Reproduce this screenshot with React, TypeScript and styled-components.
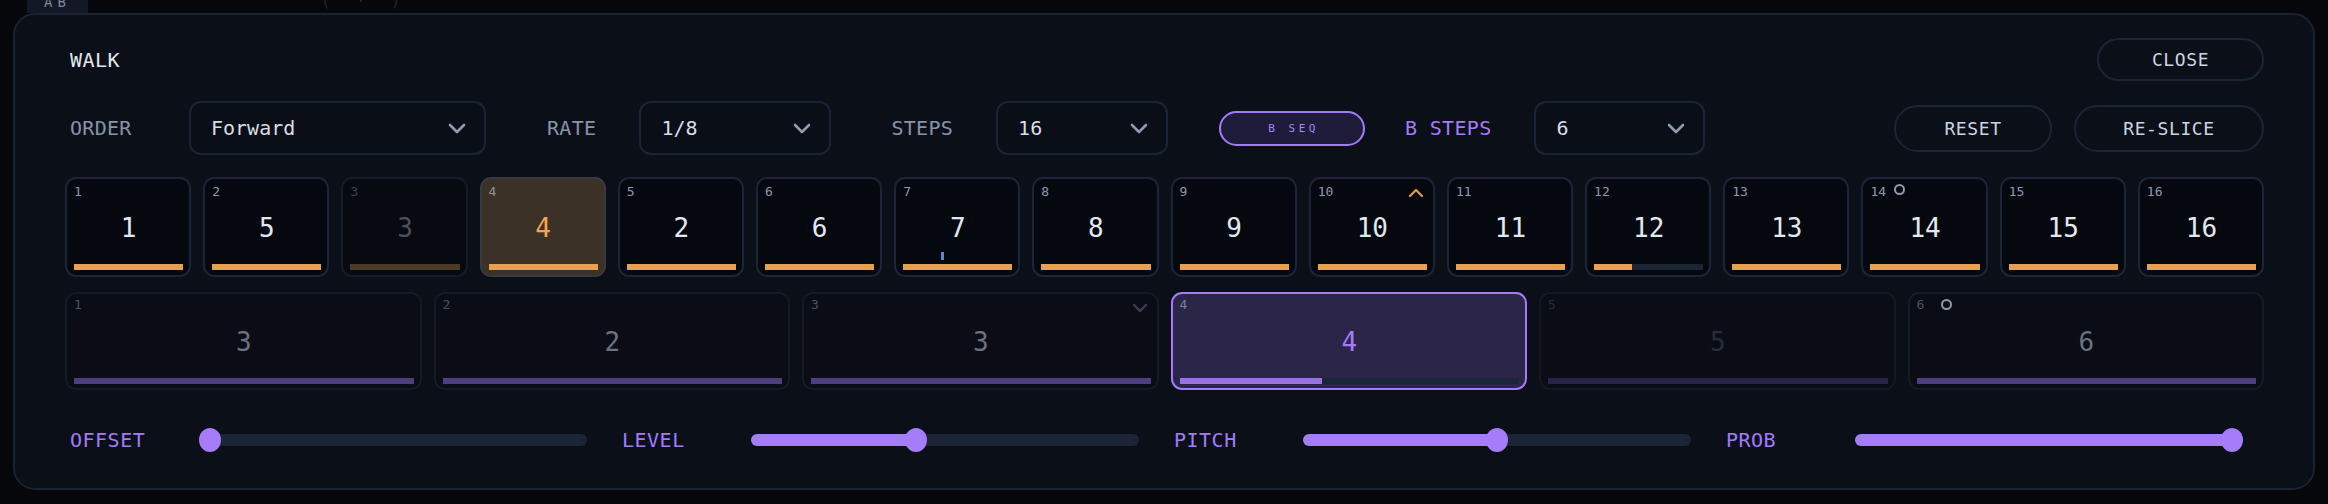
import React from "react";
import styled, { createGlobalStyle } from "styled-components";

const GlobalStyle = createGlobalStyle`
  html, body {
    margin: 0;
    padding: 0;
    background: #05070b;
  }
  body {
    width: 2328px;
    height: 504px;
    overflow: hidden;
    font-family: "DejaVu Sans Mono", "Liberation Mono", monospace;
  }
  * {
    box-sizing: border-box;
  }
`;

const Page = styled.div`
  width: 2328px;
  height: 504px;
  display: flex;
  flex-direction: column;
`;

/* strip of the window behind the dialog */
const TopStrip = styled.div`
  height: 13px;
  display: flex;
  align-items: flex-start;
  overflow: hidden;
  padding-left: 27px;
`;

const TabChip = styled.div`
  width: 61px;
  height: 13px;
  background: #131924;
  overflow: hidden;
  display: flex;
  justify-content: center;
`;

const TabText = styled.span`
  display: block;
  margin-top: -7px;
  line-height: 18px;
  font-size: 14px;
  letter-spacing: 5px;
  color: #7d889b;
`;

const GhostText = styled.span`
  display: block;
  margin-left: 233px;
  margin-top: -8px;
  line-height: 18px;
  font-size: 16px;
  letter-spacing: 2px;
  color: #1f2631;
  white-space: pre;
`;

const Panel = styled.section`
  margin: 0 13px;
  height: 477px;
  border: 2px solid #1a2333;
  border-radius: 22px;
  background: #0b0f18;
  padding: 23px 49px 0 50px;
  display: flex;
  flex-direction: column;
`;

const Header = styled.header`
  height: 43px;
  display: flex;
  align-items: center;
  justify-content: space-between;
`;

const Title = styled.h2`
  margin: 0;
  padding-left: 5px;
  font-size: 20px;
  font-weight: 400;
  letter-spacing: 0.5px;
  color: #e2e8f0;
`;

const PillButton = styled.button<{ $w: number; $h: number }>`
  width: ${(p) => p.$w}px;
  height: ${(p) => p.$h}px;
  border-radius: 24px;
  border: 2px solid #1b2435;
  background: transparent;
  color: #cbd5e1;
  font-family: inherit;
  font-size: 18px;
  letter-spacing: 0.6px;
  padding: 0;
  display: flex;
  align-items: center;
  justify-content: center;
`;

const Controls = styled.div`
  margin-top: 20px;
  height: 54px;
  display: flex;
  align-items: center;
  padding-left: 5px;
`;

const Field = styled.div<{ $before: number }>`
  display: flex;
  align-items: center;
  gap: 43px;
  margin-left: ${(p) => p.$before}px;
`;

const FieldLabel = styled.span<{ $accent?: boolean; $min?: number }>`
  font-size: 20px;
  letter-spacing: 0.3px;
  color: ${(p) => (p.$accent ? "#a47bfa" : "#8794aa")};
  min-width: ${(p) => p.$min ?? 0}px;
`;

const Select = styled.div<{ $w: number }>`
  width: ${(p) => p.$w}px;
  height: 54px;
  border: 2px solid #1b2435;
  border-radius: 12px;
  background: #0a0e17;
  display: flex;
  align-items: center;
  justify-content: space-between;
  padding: 0 18px 0 20px;
  color: #d8dee8;
  font-size: 20px;
`;

const SeqToggle = styled.button<{ $before: number }>`
  margin-left: ${(p) => p.$before}px;
  width: 146px;
  height: 35px;
  border-radius: 18px;
  border: 2px solid #a47bfa;
  background: #1e1b3b;
  color: #a48af5;
  font-family: inherit;
  font-size: 11px;
  letter-spacing: 3.5px;
  padding: 0 0 0 3px;
  display: flex;
  align-items: center;
  justify-content: center;
`;

const Spacer = styled.div`
  flex: 1;
`;

const ButtonPair = styled.div`
  display: flex;
  gap: 22px;
`;

const StepGrid = styled.div`
  margin-top: 22px;
  display: grid;
  grid-template-columns: repeat(16, 1fr);
  gap: 12px;
`;

const SliceGrid = styled.div`
  margin-top: 15px;
  display: grid;
  grid-template-columns: repeat(6, 1fr);
  gap: 12px;
`;

type TileState = "normal" | "dim" | "active";

const stepLook = {
  normal: { bg: "#05080f", border: "#1b2537", idx: "#8e9ab0", num: "#e2e8f0", bar: "#e2a24f" },
  dim: { bg: "#070a11", border: "#151c28", idx: "#3a4252", num: "#4a505c", bar: "#4a3b28" },
  active: { bg: "#3c3126", border: "#363a42", idx: "#8d9098", num: "#f2a64c", bar: "#e2a24f" },
};

const sliceLook = {
  normal: { bg: "#0a0d16", border: "#141b27", idx: "#4a5363", num: "#6b7280", bar: "#4d3f80" },
  dim: { bg: "#0a0d16", border: "#121824", idx: "#262d3a", num: "#262d3a", bar: "#28234a" },
  active: { bg: "#2b2548", border: "#a47bfa", idx: "#7b7f97", num: "#a47bfa", bar: "#9a70e6" },
};

const StepTile = styled.div<{ $state: TileState }>`
  position: relative;
  height: 100px;
  border-radius: 11px;
  border: 2px solid ${(p) => stepLook[p.$state].border};
  background: ${(p) => stepLook[p.$state].bg};
  padding: 6px 6px 5px 7px;
  display: grid;
  grid-template-rows: 14px 1fr 6px;
  color: ${(p) => stepLook[p.$state].num};
`;

const SliceTile = styled.div<{ $state: TileState }>`
  position: relative;
  height: 98px;
  border-radius: 11px;
  border: 2px solid ${(p) => sliceLook[p.$state].border};
  background: ${(p) => sliceLook[p.$state].bg};
  padding: 4px 6px 4px 7px;
  display: grid;
  grid-template-rows: 14px 1fr 6px;
  color: ${(p) => sliceLook[p.$state].num};
`;

const Index = styled.span<{ $color: string }>`
  font-size: 13px;
  line-height: 14px;
  color: ${(p) => p.$color};
`;

const Value = styled.span<{ $lift: number }>`
  align-self: center;
  justify-self: center;
  font-size: 26px;
  line-height: 30px;
  margin-bottom: ${(p) => p.$lift}px;
`;

const Bar = styled.div<{ $track: string }>`
  height: 6px;
  background: ${(p) => p.$track};
  display: flex;
`;

const BarFill = styled.div<{ $color: string }>`
  height: 100%;
  background: ${(p) => p.$color};
`;

const RingMark = styled.span`
  position: absolute;
  left: 31px;
  top: 5px;
  width: 11px;
  height: 11px;
  border-radius: 50%;
  border: 2px solid #8f99aa;
`;

const CornerChevron = styled.svg`
  position: absolute;
  right: 9px;
  top: 9px;
`;

const PlayTick = styled.span`
  position: absolute;
  left: 45px;
  bottom: 15px;
  width: 3px;
  height: 8px;
  background: #5f83d6;
`;

const SliderRow = styled.div`
  margin-top: 38px;
  display: grid;
  grid-template-columns: repeat(4, 1fr);
  gap: 9px;
`;

const SliderGroup = styled.div`
  display: grid;
  grid-template-columns: 134px 1fr;
  align-items: center;
  padding-right: 21px;
  height: 24px;
`;

const SliderLabel = styled.span`
  padding-left: 5px;
  font-size: 20px;
  letter-spacing: 0.5px;
  color: #a47bfa;
`;

const Track = styled.div`
  position: relative;
  height: 12px;
  border-radius: 6px;
  background: #1b2435;
`;

const TrackFill = styled.div`
  position: absolute;
  left: 0;
  top: 0;
  bottom: 0;
  border-radius: 6px;
  background: #a57cf9;
`;

const Thumb = styled.div`
  position: absolute;
  top: 50%;
  width: 22px;
  height: 24px;
  margin: -12px 0 0 -11px;
  border-radius: 50%;
  background: #a57cf9;
`;

const ChevronDown = ({ color = "#8f9bb0" }: { color?: string }) => (
  <svg width="18" height="11" viewBox="0 0 18 11" fill="none">
    <path d="M2 2l7 7 7-7" stroke={color} strokeWidth="2.6" strokeLinecap="round" strokeLinejoin="round" />
  </svg>
);

type Step = {
  index: number;
  value: number;
  state?: TileState;
  fill?: number;
  mark?: "ring" | "up" | "down" | "tick";
};

const steps: Step[] = [
  { index: 1, value: 1 },
  { index: 2, value: 5 },
  { index: 3, value: 3, state: "dim" },
  { index: 4, value: 4, state: "active" },
  { index: 5, value: 2 },
  { index: 6, value: 6 },
  { index: 7, value: 7, mark: "tick" },
  { index: 8, value: 8 },
  { index: 9, value: 9 },
  { index: 10, value: 10, mark: "up" },
  { index: 11, value: 11 },
  { index: 12, value: 12, fill: 0.35 },
  { index: 13, value: 13 },
  { index: 14, value: 14, mark: "ring" },
  { index: 15, value: 15 },
  { index: 16, value: 16 },
];

const slices: Step[] = [
  { index: 1, value: 3 },
  { index: 2, value: 2 },
  { index: 3, value: 3, mark: "down" },
  { index: 4, value: 4, state: "active", fill: 0.42 },
  { index: 5, value: 5, state: "dim" },
  { index: 6, value: 6, mark: "ring" },
];

const sliders = [
  { label: "OFFSET", value: 0 },
  { label: "LEVEL", value: 0.42 },
  { label: "PITCH", value: 0.5 },
  { label: "PROB", value: 1 },
];

const Mark = ({ kind }: { kind?: Step["mark"] }) => {
  if (kind === "ring") return <RingMark />;
  if (kind === "tick") return <PlayTick />;
  if (kind === "up")
    return (
      <CornerChevron width="16" height="10" viewBox="0 0 16 10" fill="none">
        <path d="M2 8l6-6 6 6" stroke="#d99a4a" strokeWidth="2.4" strokeLinecap="round" strokeLinejoin="round" />
      </CornerChevron>
    );
  if (kind === "down")
    return (
      <CornerChevron width="16" height="10" viewBox="0 0 16 10" fill="none">
        <path d="M2 2l6 6 6-6" stroke="#364154" strokeWidth="2.4" strokeLinecap="round" strokeLinejoin="round" />
      </CornerChevron>
    );
  return null;
};

const Slider = ({ label, value }: { label: string; value: number }) => {
  const pos = `calc(11px + (100% - 22px) * ${value})`;
  return (
    <SliderGroup>
      <SliderLabel>{label}</SliderLabel>
      <Track>
        {value > 0 && <TrackFill style={{ width: pos }} />}
        <Thumb style={{ left: pos }} />
      </Track>
    </SliderGroup>
  );
};

export default function App() {
  return (
    <Page>
      <GlobalStyle />
      <TopStrip>
        <TabChip>
          <TabText>AB</TabText>
        </TabChip>
        <GhostText>{"(  ·  )"}</GhostText>
      </TopStrip>
      <Panel>
        <Header>
          <Title>WALK</Title>
          <PillButton $w={167} $h={43}>CLOSE</PillButton>
        </Header>

        <Controls>
          <Field $before={0}>
            <FieldLabel $min={76}>ORDER</FieldLabel>
            <Select $w={297}>
              <span>Forward</span>
              <ChevronDown />
            </Select>
          </Field>
          <Field $before={61}>
            <FieldLabel>RATE</FieldLabel>
            <Select $w={192}>
              <span>1/8</span>
              <ChevronDown />
            </Select>
          </Field>
          <Field $before={60}>
            <FieldLabel>STEPS</FieldLabel>
            <Select $w={172}>
              <span>16</span>
              <ChevronDown />
            </Select>
          </Field>
          <SeqToggle $before={51}>B SEQ</SeqToggle>
          <Field $before={40}>
            <FieldLabel $accent>B STEPS</FieldLabel>
            <Select $w={171}>
              <span>6</span>
              <ChevronDown />
            </Select>
          </Field>
          <Spacer />
          <ButtonPair>
            <PillButton $w={158} $h={47}>RESET</PillButton>
            <PillButton $w={190} $h={47}>RE-SLICE</PillButton>
          </ButtonPair>
        </Controls>

        <StepGrid>
          {steps.map((s) => {
            const state = s.state ?? "normal";
            const look = stepLook[state];
            return (
              <StepTile key={s.index} $state={state}>
                <Index $color={look.idx}>{s.index}</Index>
                <Value $lift={7}>{s.value}</Value>
                <Bar $track={s.fill !== undefined ? "#1c2537" : look.bar}>
                  {s.fill !== undefined && (
                    <BarFill $color={look.bar} style={{ width: `${s.fill * 100}%` }} />
                  )}
                </Bar>
                <Mark kind={s.mark} />
              </StepTile>
            );
          })}
        </StepGrid>

        <SliceGrid>
          {slices.map((s) => {
            const state = s.state ?? "normal";
            const look = sliceLook[state];
            return (
              <SliceTile key={s.index} $state={state}>
                <Index $color={look.idx}>{s.index}</Index>
                <Value $lift={6}>{s.value}</Value>
                <Bar $track={s.fill !== undefined ? "#1c2537" : look.bar}>
                  {s.fill !== undefined && (
                    <BarFill $color={look.bar} style={{ width: `${s.fill * 100}%` }} />
                  )}
                </Bar>
                <Mark kind={s.mark} />
              </SliceTile>
            );
          })}
        </SliceGrid>

        <SliderRow>
          {sliders.map((s) => (
            <Slider key={s.label} label={s.label} value={s.value} />
          ))}
        </SliderRow>
      </Panel>
    </Page>
  );
}
